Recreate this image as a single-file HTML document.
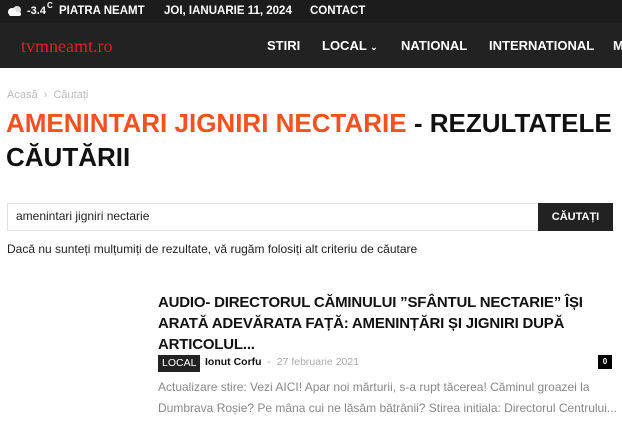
<!DOCTYPE html>
<html><head><meta charset="utf-8"><style>
*{margin:0;padding:0;box-sizing:border-box}
body{width:622px;height:438px;overflow:hidden;background:#fff;font-family:"Liberation Sans",sans-serif;position:relative}
.a{position:absolute;white-space:nowrap}
.top{position:absolute;left:0;top:0;width:622px;height:23px;background:#1c1c1c}
.nav{position:absolute;left:0;top:23px;width:622px;height:45px;background:#222}
.t{color:#fff;font-weight:bold;font-size:11.5px}
.n{color:#fff;font-weight:bold;font-size:13px;top:38px}
</style></head><body>
<div class="top"></div>
<svg class="a" style="left:6px;top:5px" width="18" height="12" viewBox="0 0 18 12"><circle cx="11" cy="5" r="4" fill="#ddd"/><circle cx="6" cy="7" r="4" fill="#fff"/><rect x="3" y="7" width="12" height="4" rx="2" fill="#fff"/></svg>
<div class="a t" style="left:27px;top:5px;font-size:11px">-3.4</div>
<div class="a t" style="left:47px;top:1px;font-size:8px">C</div>
<div class="a t" style="left:59px;top:5px">PIATRA NEAMT</div>
<div class="a t" style="left:164px;top:5px">JOI, IANUARIE 11, 2024</div>
<div class="a t" style="left:310px;top:5px">CONTACT</div>
<div class="nav"></div>
<div class="a" style="left:21px;top:36px;color:#e02020;font-family:'Liberation Serif',serif;font-size:18px">tvmneamt.ro</div>
<div class="a n" style="left:267px">STIRI</div>
<div class="a n" style="left:322px">LOCAL <span style="font-size:9px">&#8964;</span></div>
<div class="a n" style="left:401px">NATIONAL</div>
<div class="a n" style="left:489px">INTERNATIONAL</div>
<div class="a n" style="left:613px">M</div>
<div class="a" style="left:7px;top:89px;font-size:11px;color:#bbb">Acasă &nbsp;›&nbsp; Căutați</div>
<div class="a" style="left:6px;top:106px;font-size:26px;font-weight:bold;line-height:34px;color:#111;white-space:normal;width:610px"><span style="color:#f4511e">AMENINTARI JIGNIRI NECTARIE</span> - REZULTATELE CĂUTĂRII</div>
<div class="a" style="left:7px;top:203px;width:532px;height:28px;border:1px solid #e1e1e1"></div>
<div class="a" style="left:16px;top:209px;font-size:12px;color:#222">amenintari jigniri nectarie</div>
<div class="a" style="left:538px;top:203px;width:75px;height:28px;background:#222;color:#fff;font-weight:bold;font-size:11px;text-align:center;line-height:28px">CĂUTAȚI</div>
<div class="a" style="left:7px;top:242px;font-size:12px;color:#222">Dacă nu sunteți mulțumiți de rezultate, vă rugăm folosiți alt criteriu de căutare</div>
<div class="a" style="left:158px;top:292px;width:460px;white-space:normal;font-size:15px;letter-spacing:-0.2px;font-weight:bold;line-height:21px;color:#111">AUDIO- DIRECTORUL CĂMINULUI ”SFÂNTUL NECTARIE” ÎȘI ARATĂ ADEVĂRATA FAȚĂ: AMENINȚĂRI ȘI JIGNIRI DUPĂ ARTICOLUL...</div>
<div class="a" style="left:158px;top:355px;background:#222;color:#fff;font-size:10.5px;padding:2px 4px;line-height:13px">LOCAL</div>
<div class="a" style="left:205px;top:356px;font-size:10.5px;font-weight:bold;color:#111">Ionut Corfu <span style="font-weight:normal;color:#aaa">&nbsp;-&nbsp; 27 februarie 2021</span></div>
<div class="a" style="left:598px;top:355px;width:14px;height:14px;background:#000;color:#fff;font-size:8px;font-weight:bold;text-align:center;line-height:14px">0</div>
<div class="a" style="left:158px;top:377px;font-size:12px;line-height:21px;color:#888">Actualizare stire: Vezi AICI! Apar noi mărturii, s-a rupt tăcerea! Căminul groazei la<br>Dumbrava Roșie? Pe mâna cui ne lăsăm bătrânii? Stirea initiala: Directorul Centrului...</div>
</body></html>
